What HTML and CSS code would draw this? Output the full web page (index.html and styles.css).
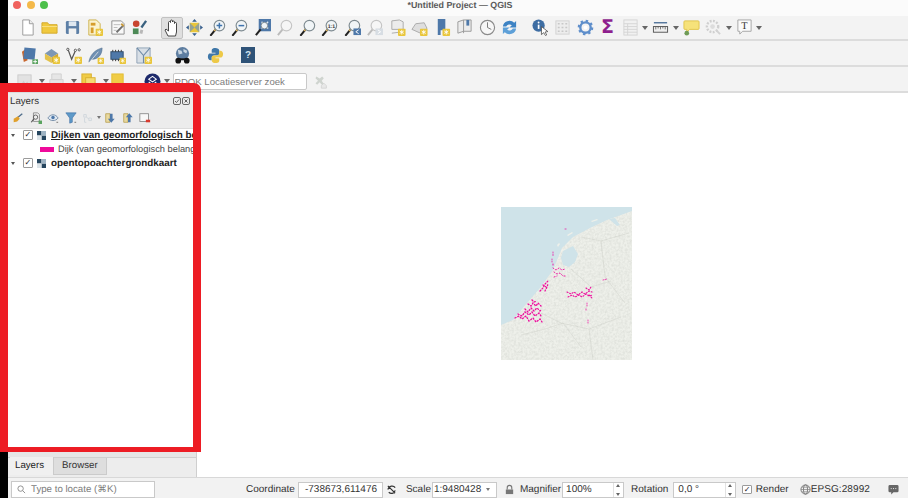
FILE: index.html
```html
<!DOCTYPE html>
<html lang="en">
<head>
<meta charset="utf-8">
<title>*Untitled Project — QGIS</title>
<link rel="stylesheet" href="styles.css">
</head>
<body>
<svg class="sprite" width="0" height="0" aria-hidden="true">
  <defs>
    <symbol id="mag" viewBox="0 0 18 18"><path d="M2 17l5-6" stroke="#222" stroke-width="2.2" stroke-linecap="round"/><path d="M5.5 12.7l1.6-1.9" stroke="#d8b060" stroke-width="2"/><circle cx="11" cy="7" r="5.6" fill="#f1f5f7" stroke="#7d8a90" stroke-width="1.2"/></symbol>
    <symbol id="gmag" viewBox="0 0 18 18"><path d="M2 17l5-6" stroke="#bbb" stroke-width="2"/><circle cx="11" cy="7" r="5.6" fill="#f6f6f6" stroke="#c4c4c4" stroke-width="1.2"/></symbol>
    <symbol id="star" viewBox="0 0 8 8"><rect width="8" height="8" rx="1" fill="#e9c63c"/><path d="M4 1.5v5M1.8 2.7l4.4 2.6M6.2 2.7L1.8 5.3" stroke="#fff" stroke-width=".9"/></symbol>
  </defs>
</svg>
<div class="screen">
  <div class="edge"></div>
  <div class="window">
    <header class="titlebar">
      <div class="lights"><span class="light red"></span><span class="light amber"></span><span class="light green"></span></div>
      <div class="title">*Untitled Project — QGIS</div>
    </header>

    <div class="bar bar-one">
      <div class="group">
        <span class="cell"><svg viewBox="0 0 18 18"><path d="M4 1h7l4 4v12H4z" fill="#fff" stroke="#9a9a9a"/><path d="M11 1v4h4" fill="#eee" stroke="#9a9a9a"/></svg></span>
        <span class="cell"><svg viewBox="0 0 18 18"><path d="M1 4h6l1.5 2H17v9H1z" fill="#f0c93e" stroke="#d2a92c"/><path d="M1 8h16" stroke="#fae28a"/></svg></span>
        <span class="cell"><svg viewBox="0 0 18 18"><rect x="2" y="2" width="14" height="14" rx="1.5" fill="#5c7fa6"/><rect x="5" y="2.5" width="8" height="5" fill="#dfe8f1"/><rect x="5" y="10" width="8" height="6" fill="#f2f2f2"/></svg></span>
        <span class="cell"><svg viewBox="0 0 18 18"><path d="M3 1h8l4 4v12H3z" fill="#fbf3cf" stroke="#cdb04a"/><rect x="5" y="4" width="5" height="3" fill="#d69d2b"/><rect x="5" y="9" width="3" height="6" fill="#d69d2b"/><use href="#star" x="10" y="10" width="8" height="8"/></svg></span>
        <span class="cell"><svg viewBox="0 0 18 18"><path d="M3 2h10l3 3v11H3z" fill="#f8f8f8" stroke="#8f8f8f"/><path d="M5 6h7M5 9h4M5 12h3" stroke="#bbb"/><path d="M8 14l7-7" stroke="#6f6f6f" stroke-width="2"/><path d="M13 5l2.5 2.5" stroke="#c79a3c" stroke-width="2"/></svg></span>
        <span class="cell"><svg viewBox="0 0 18 18"><circle cx="5.5" cy="5" r="3.5" fill="#c8452f"/><rect x="2" y="10" width="6" height="6" fill="#4d8a57"/><path d="M16 2l-5 7" stroke="#39617f" stroke-width="2.4"/><path d="M10 11l3 1-1 4-3-1z" fill="#b8b8b8"/></svg></span>
      </div>
      <div class="group tools">
        <span class="cell pressed"><svg viewBox="0 0 18 18"><path d="M5 17l-3-6 1-1 2.500 2V3.500a1 1 0 0 1 2 0V2a1 1 0 0 1 2 0v1a1 1 0 0 1 2 0v1.500a1 1 0 0 1 2 0V13l-1 4z" fill="#fff" stroke="#333" stroke-width=".9"/></svg></span>
        <span class="cell"><svg viewBox="0 0 18 18"><path d="M9 0l2.500 3h-5zM9 18l-2.500-3h5zM0 9l3-2.500v5zM18 9l-3 2.500v-5z" fill="#39608d"/><path d="M4 4h10v10H4z" fill="#e9c63c"/><path d="M4 4l5 5-5 5zM14 4l-5 5 5 5z" fill="#6f93bd" opacity=".7"/></svg></span>
        <span class="cell"><svg viewBox="0 0 18 18"><use href="#mag"/><path d="M8 7h6M11 4v6" stroke="#3f74ad" stroke-width="1.6"/></svg></span>
        <span class="cell"><svg viewBox="0 0 18 18"><use href="#mag"/><path d="M8 7h6" stroke="#3f74ad" stroke-width="1.6"/></svg></span>
        <span class="cell"><svg viewBox="0 0 18 18"><rect x="5" y="0" width="13" height="13" fill="#4e78a9"/><path d="M8 3l7 7M15 3l-7 7" stroke="#dfe8f1" stroke-width="1.4"/><path d="M2 17l5-6" stroke="#222" stroke-width="2.2"/><circle cx="11" cy="7" r="3.5" fill="#eef4f8" stroke="#7d8a90"/></svg></span>
        <span class="cell"><svg viewBox="0 0 18 18"><use href="#gmag"/></svg></span>
        <span class="cell"><svg viewBox="0 0 18 18"><use href="#mag"/></svg></span>
        <span class="cell"><svg viewBox="0 0 18 18"><use href="#mag"/><text x="11" y="9.500" class="mini">1:1</text></svg></span>
        <span class="cell"><svg viewBox="0 0 18 18"><use href="#mag"/><rect x="10" y="10" width="8" height="7" fill="#4e78a9"/><path d="M15.500 11.500L12.500 13.500l3 2" stroke="#fff" fill="none"/></svg></span>
        <span class="cell"><svg viewBox="0 0 18 18"><use href="#gmag"/><rect x="10" y="10" width="8" height="7" fill="#d7dde3"/><path d="M12.500 11.500l3 2-3 2" stroke="#fff" fill="none"/></svg></span>
        <span class="cell"><svg viewBox="0 0 18 18"><path d="M3 2l8-1 4 2v8H3z" fill="#ececec" stroke="#aaa"/><path d="M3 15l8-1" stroke="#aaa"/><use href="#star" x="9" y="10" width="9" height="8"/></svg></span>
        <span class="cell"><svg viewBox="0 0 18 18"><path d="M1 11l4-6 9-1 3 6-7 5z" fill="#dedede" stroke="#aaa"/><use href="#star" x="9" y="10" width="9" height="8"/></svg></span>
        <span class="cell"><svg viewBox="0 0 18 18"><path d="M4 0h8v12H7v5H4z" fill="#4e78a9"/><use href="#star" x="8" y="10" width="10" height="8"/></svg></span>
        <span class="cell"><svg viewBox="0 0 18 18"><path d="M2 3l6-2h8v12H8l-6 2z" fill="#ececec" stroke="#999"/><path d="M8 1v14" stroke="#999"/><path d="M11 1h3v6h-3z" fill="#4e78a9"/></svg></span>
        <span class="cell"><svg viewBox="0 0 18 18"><circle cx="9" cy="9" r="7.500" fill="#f7f7f7" stroke="#8a8a8a" stroke-width="1.2"/><path d="M9 3.500V9l4 2" stroke="#777" fill="none"/></svg></span>
        <span class="cell"><svg viewBox="0 0 18 18"><path d="M2 8a7 6.500 0 0 1 12-4l2-2v7h-7l2.500-2.500A4 4 0 0 0 5.500 8z" fill="#3d83c4"/><path d="M16 10a7 6.500 0 0 1-12 4l-2 2V9h7l-2.500 2.500A4 4 0 0 0 12.500 10z" fill="#5ea0d8"/></svg></span>
      </div>
      <div class="group tools-b">
        <span class="cell"><svg viewBox="0 0 18 18"><circle cx="7" cy="7" r="6.500" fill="#3d6da3"/><circle cx="7" cy="3.700" r="1" fill="#fff"/><path d="M7 6v4.500" stroke="#fff" stroke-width="1.8"/><path d="M10 8v8.500l2.300-2 2 3 1.300-.7-1.800-3 3-.5z" fill="#fff" stroke="#444" stroke-width=".8"/></svg></span>
        <span class="cell"><svg viewBox="0 0 18 18"><rect x="2" y="2" width="14" height="14" fill="#ededed" stroke="#d2d2d2"/><path d="M4 5h2M8 5h2M12 5h2M4 9h2M8 9h2M12 9h2M4 13h2M8 13h2M12 13h2" stroke="#c8c8c8" stroke-width="1.5"/></svg></span>
        <span class="cell"><svg viewBox="0 0 18 18"><circle cx="9" cy="9" r="5.500" fill="none" stroke="#5f8fcb" stroke-width="2.5"/><circle cx="9" cy="9" r="7" fill="none" stroke="#5f8fcb" stroke-width="2.5" stroke-dasharray="2.500 3"/><circle cx="9" cy="9" r="2" fill="#fff"/></svg></span>
        <span class="cell"><span class="sigma">Σ</span></span>
        <span class="cell"><svg viewBox="0 0 18 18"><rect x="2" y="1" width="14" height="16" fill="#f1f1f1" stroke="#d4d4d4"/><path d="M2 5h14M2 8h14M2 11h14M2 14h14M6 5v12" stroke="#d4d4d4"/></svg></span>
        <span class="caret"></span>
        <span class="cell"><svg viewBox="0 0 18 18"><path d="M2 4h14" stroke="#39608d" stroke-width="1.3"/><rect x="1.500" y="8" width="15" height="6" fill="#eee" stroke="#555"/><path d="M4 8v3M6.500 8v2M9 8v3M11.500 8v2M14 8v3" stroke="#555" stroke-width=".8"/></svg></span>
        <span class="caret"></span>
        <span class="cell"><svg viewBox="0 0 18 18"><path d="M2 2h14a1 1 0 0 1 1 1v7a1 1 0 0 1-1 1H7l-3 3v-3H2a1 1 0 0 1-1-1V3a1 1 0 0 1 1-1z" fill="#f6e27a" stroke="#e0c44a"/><circle cx="4" cy="15" r="2.500" fill="#6f9b57"/></svg></span>
        <span class="cell"><svg viewBox="0 0 18 18"><circle cx="8" cy="8" r="6" fill="none" stroke="#cfcfcf" stroke-width="2.5" stroke-dasharray="2 1.500"/><circle cx="8" cy="8" r="2.500" fill="#ddd"/><path d="M12 12l4 4" stroke="#d2d2d2" stroke-width="2"/></svg></span>
        <span class="caret"></span>
        <span class="cell"><svg viewBox="0 0 18 18"><path d="M2 1h14v12H7l-3 3v-3H2z" fill="#fafafa" stroke="#a5a5a5"/><text x="9" y="10.500" class="serif">T</text></svg></span>
        <span class="caret"></span>
      </div>
    </div>

    <div class="bar bar-two">
      <span class="cell"><svg viewBox="0 0 18 18"><path d="M1 5l4-3 2 12-4 2z" fill="#c8672f"/><rect x="3" y="1" width="12" height="12" fill="#4e78a9" transform="rotate(6 9 7)"/><path d="M12 13h6v5h-6z" fill="#5aa35f"/><path d="M15 13.500v4M13 15.500h4" stroke="#fff"/></svg></span>
      <span class="cell"><svg viewBox="0 0 18 18"><path d="M2 7l7-5 7 5-7 4z" fill="#7c97b5"/><path d="M2 7v6l7 4V11z" fill="#e3c24b"/><path d="M16 7v6l-7 4V11z" fill="#cfa633"/><use href="#star" x="10" y="10" width="8" height="8"/></svg></span>
      <span class="cell"><svg viewBox="0 0 18 18"><path d="M3 2l4 11 4-9" fill="none" stroke="#555" stroke-width="1.3"/><circle cx="3" cy="2.500" r="1.200" fill="#fff" stroke="#555"/><circle cx="11" cy="3.500" r="1.200" fill="#fff" stroke="#555"/><circle cx="15" cy="3" r="1.200" fill="#fff" stroke="#555"/><use href="#star" x="10" y="10" width="8" height="8"/></svg></span>
      <span class="cell"><svg viewBox="0 0 18 18"><path d="M2 16C3 9 8 3 16 1c0 8-5 12-11 12z" fill="#6f90b3" stroke="#4e6c8a" stroke-width=".6"/><path d="M2 17L12 5" stroke="#eee" stroke-width=".8"/><use href="#star" x="11" y="11" width="7" height="7"/></svg></span>
      <span class="cell"><svg viewBox="0 0 18 18"><rect x="2" y="5" width="13" height="8" fill="#4e78a9" stroke="#2f4f70"/><path d="M4 3v2M7 3v2M10 3v2M13 3v2M4 13v2M7 13v2M10 13v2M13 13v2" stroke="#333"/><use href="#star" x="11" y="11" width="7" height="7"/></svg></span>
      <span class="cell cell-wide"><svg viewBox="0 0 18 18"><path d="M2 1h14v16H2z" fill="#d8dfe6" stroke="#8fa3b6"/><path d="M2 1l7 8 7-8M9 9v8" stroke="#6f8ba8" fill="none" stroke-width="1.2"/><use href="#star" x="10" y="10" width="8" height="8"/></svg></span>
      <span class="cell cell-globe"><svg viewBox="0 0 18 18"><circle cx="9" cy="7" r="7" fill="#5d7da0"/><path d="M4 3l4 1 1 3-4 1zM10 2l4 2-1 3-3-2z" fill="#c9d6e2"/><circle cx="4.500" cy="14.500" r="3" fill="#111"/><circle cx="13.500" cy="14.500" r="3" fill="#111"/><path d="M4 12h10v2H4z" fill="#111"/></svg></span>
      <span class="cell cell-py"><svg viewBox="0 0 18 18"><path d="M9 1C5 1 5 3 5 4v2h4v1H3C1 7 1 10 1 11s1 3 3 3h1v-3c0-1 1-2 3-2h3c1 0 2-1 2-2V4c0-2-2-3-4-3z" fill="#3f77a8"/><path d="M9 17c4 0 4-2 4-3v-2H9v-1h6c2 0 2-3 2-4s-1-3-3-3h-1v3c0 1-1 2-3 2H7c-1 0-2 1-2 2v3c0 2 2 3 4 3z" fill="#edc948"/></svg></span>
      <span class="cell cell-help"><span class="help">?</span></span>
    </div>

    <div class="bar bar-three">
      <span class="cell"><svg viewBox="0 0 18 18"><rect x="2" y="2" width="14" height="14" fill="#e2e2e2" stroke="#ccc"/><path d="M5 13l3-5 2 3 2-2 2 4z" fill="#cfcfcf"/></svg></span>
      <span class="caret"></span>
      <span class="cell"><svg viewBox="0 0 18 18"><path d="M4 1h10v6H4zM2 7h14v7H2z" fill="#e6e6e6" stroke="#d0d0d0"/><path d="M5 11h8v6H5z" fill="#f4f4f4" stroke="#d0d0d0"/></svg></span>
      <span class="caret"></span>
      <span class="cell"><svg viewBox="0 0 18 18"><rect x="2" y="1" width="10" height="13" fill="#f0cc46" stroke="#d8b030"/><rect x="6" y="5" width="10" height="11" fill="#f5dc73" stroke="#d8b030"/><path d="M9 15h8v3H9z" fill="#c84a3a"/></svg></span>
      <span class="caret"></span>
      <span class="cell cell-note"><svg viewBox="0 0 18 18"><rect x="3" y="1" width="12" height="13" fill="#f0cc46" stroke="#e2bd33"/><path d="M13 14h4" stroke="#888" stroke-width="1.5"/></svg></span>
      <span class="cell cell-pdok"><svg viewBox="0 0 18 18"><circle cx="9" cy="9" r="8.500" fill="#1d2a6b"/><path d="M9 3.500l4 3-4 3-4-3zM5 9.500l4 3 4-3M6 12.500l3 2 3-2" fill="none" stroke="#fff" stroke-width="1.1"/></svg></span>
      <span class="caret"></span>
      <input class="field pdok" type="text" placeholder="PDOK Locatieserver zoek" aria-label="PDOK Locatieserver zoek">
      <span class="cell cell-clear"><svg viewBox="0 0 18 18"><path d="M4 3l4 2.500L11 3l2 2-2.500 3 2.500 4-2.500 1L8 10l-3 3-2-2 3-3-3-3z" fill="#cfd4cf"/><path d="M10 14l3-3 3 3v3h-6z" fill="#e8e8e8" stroke="#d2d2d2"/></svg></span>
    </div>

    <main class="main">
      <aside class="dock">
        <section class="panel">
          <div class="panel-head">
            <span class="panel-title">Layers</span>
            <span class="panel-btns">
              <svg viewBox="0 0 8 8"><rect x=".5" y=".5" width="7" height="7" rx="1.5" fill="none" stroke="#666"/><path d="M2 4l1.500 1.500L6 2.500" fill="none" stroke="#666"/></svg>
              <svg viewBox="0 0 8 8"><rect x=".5" y=".5" width="7" height="7" rx="1.5" fill="none" stroke="#666"/><path d="M2.500 2.500l3 3M5.500 2.500l-3 3" stroke="#666"/></svg>
            </span>
          </div>
          <div class="panel-tools">
            <span class="tool"><svg viewBox="0 0 14 14"><path d="M12 2L7 6" stroke="#4e6c8a" stroke-width="1.5"/><path d="M2 8l5-3 2 3-3 3-4 1z" fill="#e0a02c"/></svg></span>
            <span class="tool"><svg viewBox="0 0 14 14"><path d="M4 1h5l2 2v8H4z" fill="#eee" stroke="#888"/><circle cx="6.500" cy="6" r="2.500" fill="none" stroke="#555"/><path d="M4.500 8l-3 4" stroke="#555" stroke-width="1.3"/><path d="M10 10h4v4h-4z" fill="#5aa35f"/></svg></span>
            <span class="tool"><svg viewBox="0 0 14 14"><path d="M1 7c3-5 9-5 12 0-3 4-9 4-12 0z" fill="#dfe8f1" stroke="#6d87a3"/><circle cx="7" cy="6.500" r="2" fill="#4e78a9"/><path d="M11 12h2" stroke="#666"/></svg></span>
            <span class="tool"><svg viewBox="0 0 14 14"><path d="M1 1h12L8.500 7v5l-3 1V7z" fill="#5e9ac9" stroke="#3d6da3" stroke-width=".7"/><path d="M11 12h2" stroke="#666"/></svg></span>
            <span class="tool"><svg viewBox="0 0 14 14"><path d="M2 3h3v3H2zM8 7h3v3H8z" fill="none" stroke="#cfd6dc"/><path d="M5 6l3 2M3 7v5h2" stroke="#cfd6dc" fill="none"/></svg></span>
            <span class="caret small"></span>
            <span class="tool"><svg viewBox="0 0 14 14"><path d="M2 2h5v10H2z" fill="#e8d9a0" stroke="#bba55a"/><path d="M7 2v6H4.500L8.500 12.500 12.500 8H10V2z" fill="#4e78a9"/></svg></span>
            <span class="tool"><svg viewBox="0 0 14 14"><path d="M2 2h5v10H2z" fill="#e8d9a0" stroke="#bba55a"/><path d="M10 12V6h2.500L8.500 1.500 4.500 6H7v6z" fill="#4e78a9"/></svg></span>
            <span class="tool"><svg viewBox="0 0 14 14"><rect x="1" y="2" width="10" height="9" fill="#f8f8f8" stroke="#888"/><rect x="8" y="9" width="5" height="3" fill="#d83a2e"/></svg></span>
          </div>
          <div class="tree">
            <div class="row">
              <span class="twist"></span><span class="check">✓</span>
              <svg class="raster" viewBox="0 0 8 8"><path d="M0 0h4v4H0zM4 4h4v4H4z" fill="#26465f"/><path d="M4 0h4v4H4z" fill="#9fb4c4"/><path d="M0 4h4v4H0z" fill="#dbe3e8"/></svg>
              <span class="layer underline">Dijken van geomorfologisch belang</span>
            </div>
            <div class="row legend">
              <span class="swatch"></span><span class="legend-text">Dijk (van geomorfologisch belang)</span>
            </div>
            <div class="row">
              <span class="twist"></span><span class="check">✓</span>
              <svg class="raster" viewBox="0 0 8 8"><path d="M0 0h4v4H0zM4 4h4v4H4z" fill="#26465f"/><path d="M4 0h4v4H4z" fill="#9fb4c4"/><path d="M0 4h4v4H0z" fill="#dbe3e8"/></svg>
              <span class="layer">opentopoachtergrondkaart</span>
            </div>
          </div>
        </section>
        <div class="dock-rest"></div>
        <nav class="tabs">
          <span class="tab active">Layers</span>
          <span class="tab">Browser</span>
        </nav>
      </aside>
      <section class="canvas">
        <svg class="map" viewBox="0 0 131 153" role="img" aria-label="Map of the Netherlands and Belgium">
          <defs>
            <filter id="grain" x="0" y="0" width="100%" height="100%"><feTurbulence type="fractalNoise" baseFrequency=".45" numOctaves="2" seed="4"/><feColorMatrix values="0 0 0 0 .58  0 0 0 0 .6  0 0 0 0 .56  .8 0 0 0 -.27"/></filter>
            <filter id="soft"><feGaussianBlur stdDeviation=".3"/></filter>
          </defs>
          <rect width="131" height="153" fill="#eef0ea"/>
          <rect width="131" height="153" filter="url(#grain)"/>
          <g filter="url(#soft)">
            <path d="M0 0H131V4L106 13 89 21 72 30 61 41 52 63 39 81 26 96 12 113 0 118z" fill="#cfe3e9"/>
            <path d="M62 44l10-5 5 8-3 8-6 5-6-2-2-7z" fill="#cfe3e9"/>
            <path d="M56 38l2-2 1 1-2 3zM66 28l5-3 1 1-5 3zM90 14l6-2 1 1-6 2z" fill="#eef0ea"/>
            <path d="M108 12l6-1 5 7-3 1z" fill="#cfe3e9"/>
          </g>
          <g fill="none" stroke="#c7cac2" stroke-width=".4">
            <path d="M40 106L60 116 88 122 120 110M70 62L90 80 110 74M62 116L80 140M100 34L104 70 124 96M20 128L44 122 62 116M80 30L100 34 128 26M88 122L92 153"/>
          </g>
          <g fill="none" stroke="#ee0a9c" stroke-linecap="round" filter="url(#soft)">
            <path d="M14 111l4-2 3 3 4-3 3 5 4-3 3 4 4-3 2 3M17 107l4 2 3-4 4 3 3-3 3 4 4-3 2 3M24 102l3 3 3-4 3 3 3-3 3 3 2-2M27 97l3 2 2-3 3 3 2-3 3 3M31 93l2 2 3-1" stroke-width="1.300" stroke-dasharray="1.100 2"/>
            <path d="M39 84l3-3 2-4 3-3M44 84l2-4 1-3M42 78l3 2" stroke-width="1.200" stroke-dasharray="1.100 1.800"/>
            <path d="M52 61l3 2 3-2 3 2 3-1M53 65l3 2 3-1 3 3 3 0M53 70l3-1M52 57v3" stroke-width=".9" stroke-dasharray="1.100 1.900"/>
            <path d="M66 85l4 2 3-2 4 3 4-3 3 2 4-3 3 1M67 90l4-2 3 2 4-2 3 2 4-3 3 2 4-1M85 81l3 2 2-3M88 88l3 3" stroke-width="1.100" stroke-dasharray="1.100 1.800"/>
            <path d="M86 96v3M52 45v4M51 52v3M102 73l4-1M87 113v3M64 22h2M85 102v2" stroke-width=".7" stroke-dasharray="1.100 1.300"/>
          </g>
        </svg>
      </section>
    </main>

    <footer class="status">
      <div class="locator"><svg viewBox="0 0 10 10"><circle cx="4" cy="4" r="3" fill="none" stroke="#888"/><path d="M6.300 6.300L9 9" stroke="#888"/></svg><span>Type to locate (⌘K)</span></div>
      <span class="label l-coord">Coordinate</span>
      <span class="field coord">-738673,611476</span>
      <svg class="st-ic" viewBox="0 0 12 12"><path d="M2 2l8 8M2 6c1-4 6-5 8-2M3 9c2 2 6 2 7-2" fill="none" stroke="#333" stroke-width="1.3"/></svg>
      <span class="label l-scale">Scale</span>
      <span class="field combo"><span>1:9480428</span><span class="caret small"></span></span>
      <svg class="st-ic lock" viewBox="0 0 12 12"><path d="M3.500 6V4a2.500 2.500 0 0 1 5 0v2" fill="none" stroke="#777" stroke-width="1.2"/><rect x="2" y="6" width="8" height="5" fill="#777"/></svg>
      <span class="label l-mag">Magnifier</span>
      <span class="field spin magn"><span>100%</span><span class="arrows"></span></span>
      <span class="label l-rot">Rotation</span>
      <span class="field spin rot"><span>0,0 °</span><span class="arrows"></span></span>
      <span class="check st-check">✓</span>
      <span class="label l-render">Render</span>
      <svg class="st-ic globe" viewBox="0 0 12 12"><circle cx="6" cy="6" r="5" fill="none" stroke="#777"/><ellipse cx="6" cy="6" rx="2.200" ry="5" fill="none" stroke="#777"/><path d="M1 6h10M2 3.500h8M2 8.500h8" stroke="#777" stroke-width=".7"/></svg>
      <span class="label l-epsg">EPSG:28992</span>
      <svg class="st-ic msg" viewBox="0 0 12 12"><path d="M2 1h8a1.500 1.500 0 0 1 1.500 1.500v5A1.500 1.500 0 0 1 10 9H6l-2.500 2.500V9H2A1.500 1.500 0 0 1 .5 7.500v-5A1.500 1.500 0 0 1 2 1z" fill="#666"/><path d="M3 5h1M5.500 5h1M8 5h1" stroke="#fff"/></svg>
    </footer>
  </div>
  <div class="callout"></div>
</div>
</body>
</html>
```
FILE: styles.css
```css
* { box-sizing: border-box; }
html, body { margin: 0; padding: 0; }
body { width: 908px; height: 498px; overflow: hidden; background: #000; font-family: "Liberation Sans", Arial, sans-serif; font-size: 10px; color: #2b2b2b; text-rendering: geometricPrecision; }
.sprite { position: absolute; }
.screen { position: relative; display: flex; width: 908px; height: 498px; }
.edge { flex: 0 0 8px; background: #000; }
.window { flex: 1; min-width: 0; display: flex; flex-direction: column; background: #f0f0f0; }

.titlebar { flex: 0 0 16px; display: flex; align-items: flex-start; padding-top: 1px; position: relative; background: #fbfbfb; }
.lights { display: flex; gap: 5.5px; padding-left: 5px; }
.light { width: 8px; height: 8px; border-radius: 50%; }
.red { background: #f0625e; }
.amber { background: #f4b94a; }
.green { background: #4cc04a; }
.title { position: absolute; left: 4px; right: 0; top: 0; line-height: 10px; text-align: center; font-size: 8.9px; font-weight: 700; color: #5a5a5a; }

.bar { display: flex; align-items: center; background: #f3f3f3; border-bottom: 2px solid #dcdcdc; min-height: 0; }
.bar-one { flex: 0 0 25px; padding-left: 7.75px; }
.bar-two { flex: 0 0 26px; padding: 4px 0 0 10px; }
.bar-three { flex: 0 0 26px; padding: 4px 0 0 6px; }
.group { display: flex; align-items: center; }
.tools { margin-left: 10px; }
.tools-b { margin-left: 8px; }

.cell { flex: 0 0 22.5px; height: 22px; display: flex; align-items: center; justify-content: center; }
.cell svg { width: 17px; height: 17px; display: block; }
.pressed { background: #dfdfdf; border: 1px solid #c2c2c2; border-radius: 2px; }
.pressed svg { width: 18px; height: 18px; }
.mini { font-size: 5.5px; font-weight: 700; text-anchor: middle; fill: #333; }
.serif { font-family: "Liberation Serif", serif; font-size: 11px; text-anchor: middle; fill: #333; }
.sigma { font-family: "DejaVu Sans", sans-serif; font-size: 19px; font-weight: 700; color: #8e1f8e; line-height: 1; }
.caret { flex: 0 0 8px; width: 8px; height: 4px; position: relative; }
.caret::after { content: ""; position: absolute; left: 1px; top: 0; border: 3px solid transparent; border-top: 4px solid #666; border-bottom: 0; }
.caret.small { flex-basis: 6px; width: 6px; }
.caret.small::after { left: 0; border-width: 3px 2.5px 0; border-top-color: #777; }

.bar-two .cell { flex-basis: 22px; height: 18px; }
.bar-two .cell-wide { margin-left: 4px; }
.bar-two .cell-globe { margin-left: 17px; }
.bar-two .cell-py { margin-left: 11px; }
.bar-two .cell-help { margin-left: 11px; }
.help { width: 14px; height: 16px; display: flex; align-items: center; justify-content: center; background: #2f5378; color: #cfe0ee; font-size: 10px; font-weight: 700; }

.bar-three .cell { flex-basis: 21px; height: 18px; }
.bar-three .caret { margin: 0 0 0 3px; }
.bar-three .cell-note { margin-left: -3px; }
.bar-three .cell-pdok { margin-left: 13.5px; }
.bar-three .cell-pdok + .caret { margin-left: 0; }
.bar-three .cell-clear svg { width: 15px; height: 15px; }
.field { background: #fff; border: 1px solid #c9c9c9; font-size: 10px; color: #333; }
.pdok { width: 134px; height: 17px; margin-left: 2px; padding: 0 1px; font-family: inherit; font-size: 9.6px; border-radius: 2px; outline: 0; }
.pdok::placeholder { color: #7c7c7c; opacity: 1; }
.bar-three .cell-clear { margin-left: 3.5px; }

.main { flex: 1; min-height: 0; display: flex; }
.dock { flex: 0 0 189px; display: flex; flex-direction: column; background: #ededed; border-right: 1px solid #cfcfcf; }
.panel { flex: 0 0 358px; display: flex; flex-direction: column; min-height: 0; background: #ececec; }
.panel-head { flex: 0 0 16px; display: flex; align-items: flex-end; justify-content: space-between; padding: 0 6px 1.5px 2px; }
.panel-title { font-size: 9.7px; line-height: 13px; color: #333; }
.panel-btns { display: flex; gap: 1px; padding-bottom: 2.5px; }
.panel-btns svg { width: 8px; height: 8px; display: block; }
.panel-tools { flex: 0 0 19px; display: flex; align-items: center; padding: 0 0 2px 1.25px; }
.tool { flex: 0 0 17.5px; display: flex; justify-content: center; }
.tool svg { width: 12px; height: 12px; display: block; }
.panel-tools .caret { margin: 0 -1.5px 0 0; }
.tree { flex: 1; background: #fff; box-shadow: inset 0 1px 0 #dcdcdc; padding-left: 3px; width: 185px; overflow: hidden; }
.row { display: flex; align-items: center; height: 14px; white-space: nowrap; }
.twist { width: 0; height: 0; flex: none; border: 2.5px solid transparent; border-top: 3.5px solid #555; border-bottom: 0; margin-right: 8px; }
.check { width: 9.5px; height: 9.5px; flex: none; display: inline-flex; align-items: center; justify-content: center; background: #fff; border: 1px solid #9b9b9b; border-radius: 1px; font-size: 8px; line-height: 1; color: #222; font-family: "DejaVu Sans", sans-serif; }
.raster { width: 9px; height: 9px; margin: 0 5px 0 4.5px; flex: none; }
.layer { font-size: 9.85px; font-weight: 700; color: #222; }
.underline { text-decoration: underline; }
.legend { padding-left: 29px; }
.swatch { width: 14px; height: 5px; background: #ef0a9b; margin-right: 4px; flex: none; }
.legend-text { font-size: 9.3px; color: #444; }
.dock-rest { flex: 0 0 7px; background: #e6e6e6; border-bottom: 1px solid #cfcfcf; }
.tabs { flex: 1; display: flex; padding-left: 2px; align-items: flex-start; }
.tab { height: 17px; padding: 0 8px; line-height: 16px; font-size: 9.7px; color: #333; background: #dedede; border: 1px solid #cbcbcb; border-left: 0; border-top: 0; }
.tab.active { background: #f0f0f0; padding: 1px 9px 0 5px; border-bottom: 0; height: 18px; margin-top: -1px; color: #222; }

.canvas { flex: 1; background: #fff; padding: 114px 0 0 304px; min-width: 0; }
.map { width: 131px; height: 153px; display: block; }

.status { flex: 0 0 20px; display: flex; align-items: center; padding-top: 3px; background: #f2f2f2; border-top: 1px solid #d8d8d8; white-space: nowrap; }
.locator { flex: none; width: 144px; height: 17px; margin: 0 0 0 3px; align-self: flex-start; display: flex; align-items: center; gap: 5px; padding-left: 5px; background: #fff; border: 1px solid #c9c9c9; color: #7c7c7c; font-size: 9.7px; }
.locator svg { width: 9px; height: 9px; flex: none; }
.label { flex: none; font-size: 10px; color: #333; }
.status .field { flex: none; height: 16px; line-height: 14px; display: flex; align-items: center; align-self: flex-end; margin-bottom: 0; }
.l-coord { margin-left: 91px; }
.coord { width: 85px; margin-left: 3px; padding-left: 6px; }
.st-ic { width: 11px; height: 11px; flex: none; display: block; }
.status > .st-ic { margin-left: 3.5px; }
.l-scale { margin-left: 8.5px; }
.combo { width: 65px; margin-left: 1px; justify-content: space-between; padding: 0 4px 0 1px; }
.status > .lock { margin-left: 7.5px; }
.l-mag { margin-left: 4.5px; }
.spin { justify-content: space-between; padding: 0 1px 0 3px; }
.magn { width: 62px; margin-left: 1px; }
.l-rot { margin-left: 7px; }
.rot { width: 63px; margin-left: 5px; padding-left: 4px; }
.arrows { position: relative; width: 9px; height: 14px; border-left: 1px solid #e2e2e2; }
.arrows::before, .arrows::after { content: ""; position: absolute; left: 1.5px; border: 2.5px solid transparent; }
.arrows::before { top: 1px; border-bottom: 3px solid #666; border-top: 0; }
.arrows::after { bottom: 1px; border-top: 3px solid #666; border-bottom: 0; }
.st-check { margin-left: 6px; }
.l-render { margin-left: 4px; }
.status > .globe { margin-left: 11px; }
.l-epsg { margin-left: 0; letter-spacing: .1px; }
.status > .msg { margin-left: 17.5px; }

.callout { position: absolute; left: 0; top: 83px; width: 201px; height: 369px; border-style: solid; border-color: #ed1c24; border-width: 9px 8px 5px 8px; border-top-right-radius: 7px; pointer-events: none; }
```
